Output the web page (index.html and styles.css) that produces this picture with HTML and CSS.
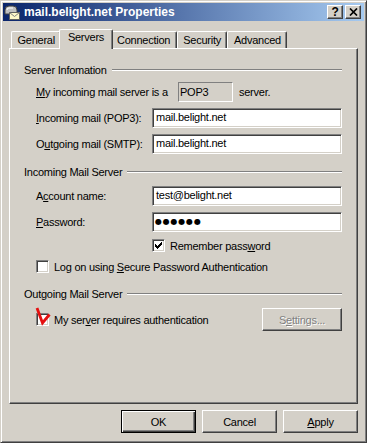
FILE: index.html
```html
<!DOCTYPE html>
<html lang="en">
<head>
    <meta charset="UTF-8">
    <title>mail.belight.net Properties</title>
    <link rel="stylesheet" href="styles.css">
</head>
<body>
    <div class="window">
        <div class="titlebar">
            <svg class="title-icon" width="16" height="16" viewBox="0 0 16 16">
                <path d="M1 10V6Q1 2 5 2H9Q13 2 13 6V10Z" fill="#c0c0c0" stroke="#404040"/>
                <path d="M3 6Q3 4 5 4H9" fill="none" stroke="#fff"/>
                <rect x="5.5" y="8.5" width="10" height="7" fill="#fff8c8" stroke="#606060"/>
                <path d="M5.5 8.5L10.5 12.5L15.5 8.5" fill="none" stroke="#808080"/>
            </svg>
            <span class="title-text">mail.belight.net Properties</span>
            <div class="caption-buttons">
                <span class="caption-btn">?</span>
                <span class="caption-btn">
                    <svg width="9" height="8" viewBox="0 0 9 8">
                        <path d="M1 0.5L8 7.5M8 0.5L1 7.5" stroke="#000" stroke-width="1.7"/>
                    </svg>
                </span>
            </div>
        </div>

        <div class="tabs">
            <div class="tab">General</div>
            <div class="tab active">Servers</div>
            <div class="tab">Connection</div>
            <div class="tab">Security</div>
            <div class="tab">Advanced</div>
        </div>

        <div class="panel">
            <div class="group-title"><span>Server Infomation</span><div class="rule"></div></div>
            <div class="row row-first">
                <span class="type-label"><u>M</u>y incoming mail server is a</span>
                <div class="readonly">POP3</div>
                <span class="after">server.</span>
            </div>
            <div class="row row-next">
                <span class="field-label"><u>I</u>ncoming mail (POP3):</span>
                <div class="field">mail.belight.net</div>
            </div>
            <div class="row row-next">
                <span class="field-label">O<u>u</u>tgoing mail (SMTP):</span>
                <div class="field">mail.belight.net</div>
            </div>

            <div class="group-title group-mid"><span>Incoming Mail Server</span><div class="rule"></div></div>
            <div class="row row-first-b">
                <span class="field-label">A<u>c</u>count name:</span>
                <div class="field">test@belight.net</div>
            </div>
            <div class="row row-next">
                <span class="field-label"><u>P</u>assword:</span>
                <div class="field password">●●●●●●</div>
            </div>
            <div class="check-row remember">
                <span class="checkbox">
                    <svg width="9" height="9" viewBox="0 0 9 9"><path d="M1 3H2V4H3V5H4V4H5V3H6V2H7V1H8V4H7V5H6V6H5V7H4V8H3V7H2V6H1Z" fill="#000"/></svg>
                </span>
                <span>Remember pass<u>w</u>ord</span>
            </div>
            <div class="check-row logon">
                <span class="checkbox"></span>
                <span>Log on using <u>S</u>ecure Password Authentication</span>
            </div>

            <div class="group-title group-last"><span>Outgoing Mail Server</span><div class="rule"></div></div>
            <div class="check-row outgoing">
                <span class="checkbox marked">
                    <svg class="mark" width="20" height="20" viewBox="0 0 20 20">
                        <path d="M3 2L8.5 17L15.5 8.5" fill="none" stroke="#e41010" stroke-width="2.8" stroke-linejoin="miter"/>
                    </svg>
                </span>
                <span>My ser<u>v</u>er requires authentication</span>
                <div class="btn btn-settings disabled">S<u>e</u>ttings...</div>
            </div>
        </div>

        <div class="buttons">
            <div class="btn btn-default">OK</div>
            <div class="btn">Cancel</div>
            <div class="btn"><u>A</u>pply</div>
        </div>
    </div>
</body>
</html>
```

FILE: styles.css
```css
* {
    box-sizing: border-box;
}

body {
    margin: 0;
    background: #d4d0c8;
    font-family: "Liberation Sans", Arial, sans-serif;
    font-size: 11px;
    letter-spacing: -0.25px;
    color: #000;
}

u {
    text-decoration: underline;
    text-underline-offset: 1px;
}

.window {
    width: 367px;
    height: 443px;
    padding: 2px;
    border: 1px solid;
    border-color: #d4d0c8 #404040 #404040 #d4d0c8;
    box-shadow: inset 1px 1px #fff, inset -1px -1px #808080;
}

/* Title bar */
.titlebar {
    height: 18px;
    display: flex;
    align-items: center;
    padding: 0 3px 0 1px;
    background: linear-gradient(to right, #0a246a, #a6caf0);
    color: #fff;
}

.title-icon {
    flex: none;
}

.title-text {
    margin-left: 4px;
    font-weight: bold;
    font-size: 12px;
    letter-spacing: 0;
}

.caption-buttons {
    margin-left: auto;
    display: flex;
    gap: 2px;
}

.caption-btn {
    width: 16px;
    height: 14px;
    display: flex;
    justify-content: center;
    align-items: center;
    background: #d4d0c8;
    color: #000;
    font-weight: bold;
    font-size: 12px;
    border: 1px solid;
    border-color: #fff #404040 #404040 #fff;
    box-shadow: inset -1px -1px #808080;
}

/* Tabs */
.tabs {
    display: flex;
    align-items: flex-end;
    height: 19px;
    margin-top: 8px;
    padding-left: 8px;
}

.tab {
    height: 17px;
    padding: 0 5.5px;
    line-height: 16px;
    border: 1px solid;
    border-bottom: none;
    border-color: #fff #404040 #fff #fff;
    border-top-left-radius: 2px;
    border-top-right-radius: 2px;
    box-shadow: inset -1px 0 #808080;
}

.tab.active {
    position: relative;
    z-index: 1;
    height: 20px;
    margin: 0 -2px -1px;
    padding: 0 7.5px;
    line-height: 15px;
    background: #d4d0c8;
}

/* Page */
.panel {
    height: 356px;
    margin: 0 6px;
    padding: 14px 15px 0 14px;
    border: 1px solid;
    border-color: #fff #404040 #404040 #fff;
    box-shadow: inset -1px -1px #808080;
}

.group-title {
    display: flex;
    align-items: center;
    height: 14px;
    line-height: 14px;
}

.group-mid {
    margin-top: 11px;
}

.group-last {
    margin-top: 14px;
}

.rule {
    flex: 1;
    margin-left: 5px;
    border-top: 1px solid #808080;
    border-bottom: 1px solid #fff;
}

.row {
    display: flex;
    align-items: center;
    height: 20px;
    padding-left: 12px;
}

.row-first {
    margin-top: 5px;
}

.row-first-b {
    margin-top: 7px;
}

.row-next {
    margin-top: 6px;
}

.type-label {
    width: 142px;
}

.readonly {
    width: 55px;
    height: 20px;
    padding-left: 1px;
    line-height: 18px;
    border: 1px solid;
    border-color: #808080 #fff #fff #808080;
}

.after {
    margin-left: 6px;
}

.field-label {
    width: 116px;
}

.field {
    flex: 1;
    height: 20px;
    line-height: 16px;
    background: #fff;
    border: 1px solid;
    border-color: #808080 #fff #fff #808080;
    box-shadow: inset 1px 1px #404040, inset -1px -1px #d4d0c8;
    padding-left: 3px;
}

.field.password {
    font-family: "DejaVu Sans", sans-serif;
    font-size: 8px;
    line-height: 17px;
    letter-spacing: 0.8px;
    padding-left: 2px;
}

.check-row {
    display: flex;
    align-items: center;
    gap: 5px;
}

.remember {
    height: 13px;
    margin-top: 7px;
    padding-left: 128px;
}

.logon {
    height: 13px;
    margin-top: 8px;
    padding-left: 12px;
}

.outgoing {
    height: 23px;
    margin-top: 7px;
    padding-left: 12px;
}

.checkbox {
    position: relative;
    flex: none;
    width: 13px;
    height: 13px;
    display: flex;
    justify-content: center;
    align-items: center;
    background: #fff;
    border: 1px solid;
    border-color: #808080 #fff #fff #808080;
    box-shadow: inset 1px 1px #404040, inset -1px -1px #d4d0c8;
}

.checkbox .mark {
    position: absolute;
    left: -3px;
    top: -8px;
    overflow: visible;
}

/* Buttons */
.btn {
    width: 75px;
    height: 23px;
    display: flex;
    justify-content: center;
    align-items: center;
    background: #d4d0c8;
    border: 1px solid;
    border-color: #fff #404040 #404040 #fff;
    box-shadow: inset -1px -1px #808080;
}

.btn-default {
    border-color: #000;
    box-shadow: inset 1px 1px #fff, inset -1px -1px #404040, inset -2px -2px #808080;
}

.btn-settings {
    width: 80px;
    margin-left: auto;
}

.btn.disabled {
    color: #808080;
    text-shadow: 1px 1px #fff;
}

.buttons {
    display: flex;
    justify-content: flex-end;
    gap: 6px;
    margin-top: 6px;
    padding-right: 6px;
}
```
